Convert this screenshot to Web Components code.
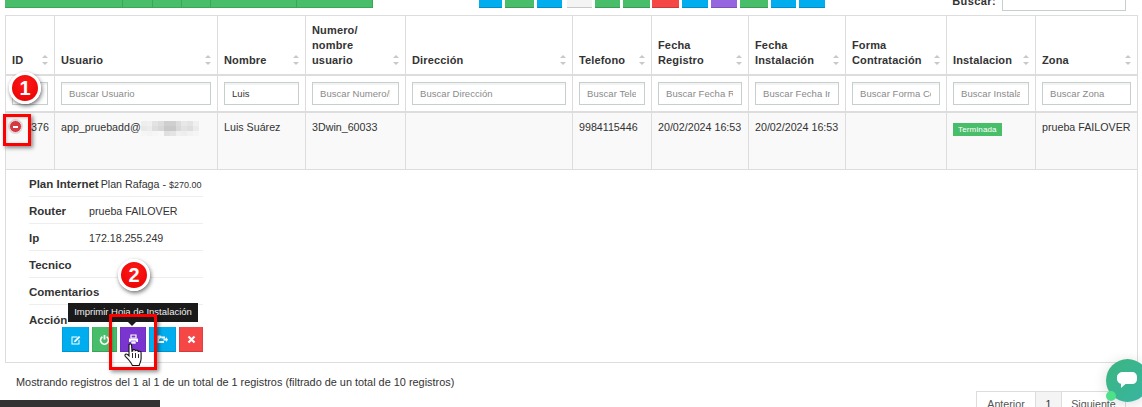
<!DOCTYPE html>
<html lang="es">
<head>
<meta charset="utf-8">
<title>Instalaciones</title>
<style>
html, body { margin: 0; padding: 0; background: #fff; overflow: hidden; }
body { font: 10.7px "Liberation Sans", Arial, sans-serif; color: #333; }
</style>
</head>
<body>
<app-page></app-page>
<script>
// small helper: every element below is a class with an open shadow root
class Base extends HTMLElement {
  constructor() {
    super();
    this.attachShadow({ mode: "open" }).innerHTML = `<style>${this.constructor.css}</style>${this.render()}`;
  }
  render() { return "<slot></slot>"; }
}

class TopToolbar extends Base {
  static css = `
    :host { display: flex; height: 15px; padding-left: 5px; position: relative; font-size: 11px; }
    .group { display: flex; height: 8px; background: #48bd6a; border-bottom: 1px solid #3aa65a; box-sizing: border-box; }
    .group i { display: block; box-sizing: border-box; border-right: 1px solid #3aa65a; }
    .center { display: flex; margin-left: 106px; height: 8px; }
    .center i { display: block; height: 8px; box-sizing: border-box; border-bottom: 1px solid rgba(0,0,0,.18); }
    .search { display: flex; margin-left: auto; margin-right: 16px; }
    label { font-weight: bold; letter-spacing: .4px; margin-top: -6px; margin-right: 6px; line-height: 14px; height: 14px; }
    .box { width: 124px; height: 11px; box-sizing: border-box; border: 1px solid #c5cfcc; border-top: 0; }
  `;
  render() {
    const seg = [118, 30, 29, 29, 86, 76];
    const btn = [[23,"#00aeef",0],[29,"#48bd6a",3],[25,"#00aeef",3],[25,"#f4f4f4",5],[25,"#48bd6a",3],[27,"#48bd6a",3],[27,"#f64747",2],[26,"#00aeef",3],[26,"#9666e0",3],[28,"#48bd6a",3],[25,"#00aeef",3],[26,"#00aeef",3]];
    return `<div class="group">${seg.map(w => `<i style="width:${w}px"></i>`).join("")}</div>
      <div class="center">${btn.map(([w, c, m]) => `<i style="width:${w}px;background:${c};margin-left:${m}px"></i>`).join("")}</div>
      <div class="search"><label>Buscar:</label><div class="box"></div></div>`;
  }
}

class StatusBadge extends Base {
  static css = `
    :host { display: inline-block; background: #48bd6a; color: #fff; font-size: 8px; line-height: 13px; height: 13px; padding: 0 5px; letter-spacing: .15px; white-space: nowrap; margin-top: 3px; }
  `;
}

class MaskedText extends Base {
  static css = `
    :host { display: inline-grid; grid-template-columns: repeat(10, 5.8px); grid-auto-rows: 5px; vertical-align: middle; margin-top: 1px; }
    i { display: block; }
  `;
  render() {
    const g = ["eee","f0f0f0","e3e3e3","ddd","cfcfcf","cfcfcf","dcdcdc","e8e8e8","e4e4e4","f0f0f0",
               "e9e9e9","ececec","dedede","d8d8d8","c9c9c9","c9c9c9","d9d9d9","e2e2e2","dedede","ebebeb",
               "f6f6f6","f4f4f4","f6f6f6","f8f8f8","e0e0e0","e4e4e4","f0f0f0","eee","f2f2f2","f5f5f5"];
    return g.map(c => `<i style="background:#${c}"></i>`).join("");
  }
}

class DetailPanel extends Base {
  static css = `
    :host { display: block; width: 174px; margin-left: 23px; font-size: 10.7px; }
    .row { height: 27px; line-height: 14px; padding-top: 7px; box-sizing: border-box; border-bottom: 1px solid #eee; white-space: nowrap; }
    .last { border: 0; height: auto; padding-top: 8px; }
    b { display: inline-block; min-width: 58px; margin-right: 2px; font-size: 11.5px; color: #333; }
    small { font-size: 9px; }
    .actions { display: flex; gap: 3px; padding-left: 33px; margin-top: 0; }
  `;
  render() {
    const row = (k, v) => `<div class="row"><b>${k}</b>${v}</div>`;
    return row("Plan Internet", "Plan Rafaga - <small>$270.00</small>") + row("Router", "prueba FAILOVER") +
      row("Ip", "172.18.255.249") + row("Tecnico", "") + row("Comentarios", "") +
      `<div class="row last"><b>Acción</b><div class="actions"><slot></slot></div></div>`;
  }
}

class ActionButton extends Base {
  static css = `
    :host { display: flex; align-items: center; justify-content: center; width: var(--w, 27px); height: 25px; box-sizing: border-box;
      background: var(--c); border-bottom: 1px solid rgba(0,0,0,.15); border-left: 1px solid rgba(0,0,0,.08); border-right: 1px solid rgba(0,0,0,.08); }
    svg { display: block; width: 11px; height: 11px; }
  `;
  render() {
    const icons = {
      edit: `<path d="M1.5 2.500h6v1H2.500v6h6V6h1v4.500h-8z" fill="#fff"/><path d="M4.500 6.500 9 2l1.300 1.300-4.500 4.500-1.800.5z" fill="#fff"/>`,
      power: `<path d="M3.400 2.800a4 4 0 1 0 4.200 0" fill="none" stroke="#fff" stroke-width="1.600"/><path d="M5.500 1v4.500" stroke="#fff" stroke-width="1.800"/>`,
      print: `<path d="M3 1h5v3H3z" fill="none" stroke="#fff" stroke-width="1.200"/><path d="M1 4.500h9v3.500H1z" fill="#fff"/><path d="M3 7h5v3H3z" fill="#fff" stroke="#7a35d0" stroke-width=".6"/>`,
      swap: `<path d="M0.500 1.500h3l1 1h3.500v2H4.500V3.500L2 5.500v1.500h5v2H0.500z" fill="#fff"/><path d="M6.500 4.500h2.500V3l2 2.700-2 2.300V6.500H6.500z" fill="#fff"/>`,
      close: `<path d="M2.500 2.500l6 6m0-6l-6 6" stroke="#fff" stroke-width="2.200"/>`
    };
    return `<svg viewBox="0 0 11 11">${icons[this.getAttribute("icon")]}</svg>`;
  }
}

class InstallTable extends Base {
  static css = `
    :host { display: block; margin-left: 5px; width: 1132px; font-size: 10.7px; }
    table { border-collapse: collapse; table-layout: fixed; width: 1132px; }
    th, td { border: 1px solid #ddd; padding: 0; text-align: left; }
    thead th { height: 52px; vertical-align: bottom; border-bottom: 2px solid #ddd; font-size: 11px; font-weight: bold; line-height: 15px; letter-spacing: .15px; color: #333; position: relative; padding: 0 18px 6px 6px; }
    thead th::before, thead th::after { content: ""; position: absolute; right: 6px; border: 3.500px solid transparent; }
    thead th::before { bottom: 16px; border-top: 0; border-bottom: 3.500px solid #c8c8c8; }
    thead th::after { bottom: 9px; border-bottom: 0; border-top: 3.500px solid #c8c8c8; }
    .filters td { height: 35px; padding: 0 6px; border-bottom: 2px solid #ddd; }
    input { display: block; width: 100%; height: 23px; box-sizing: border-box; border: 1px solid #c5cfcc; padding: 0 8px 0 7px; font: 9.500px "Liberation Sans", Arial, sans-serif; letter-spacing: .05px; color: #333; background: #fff; box-shadow: inset 0 2px 0 #f3f3f3; border-radius: 0; }
    input::placeholder { color: #8a8a8a; opacity: 1; }
    .data td { height: 49px; background: #f9f9f9; vertical-align: top; padding: 7px 0 0 6px; line-height: 14px; white-space: nowrap; }
    .data .id { padding-left: 25px; position: relative; }
    .open { position: absolute; left: 3px; top: 7px; width: 13px; height: 13px; border-radius: 50%; background: #d33a44; border: 1px solid #f2d6d8; box-shadow: 0 0 0 1px #ddd; box-sizing: border-box; }
    .open::after { content: ""; position: absolute; left: 3px; top: 4.500px; width: 5px; height: 2px; background: #fff; }
    .detail td { height: 192px; vertical-align: top; padding: 0; border-bottom: 1px solid #ddd; }
  `;
  render() {
    const cols = [
      ["ID", 49, ""], ["Usuario", 163, "Buscar Usuario"], ["Nombre", 88, "Buscar Nombre"],
      ["Numero/<br>nombre<br>usuario", 100, "Buscar Numero/Nombre"], ["Dirección", 167, "Buscar Dirección"],
      ["Telefono", 79, "Buscar Telefono"], ["Fecha<br>Registro", 97, "Buscar Fecha Registro"],
      ["Fecha<br>Instalación", 97, "Buscar Fecha Instalación"], ["Forma<br>Contratación", 101, "Buscar Forma Contratación"],
      ["Instalacion", 89, "Buscar Instalacion"], ["Zona", 102, "Buscar Zona"]
    ];
    return `<table>
      <colgroup>${cols.map(c => `<col style="width:${c[1]}px">`).join("")}</colgroup>
      <thead><tr>${cols.map(c => `<th>${c[0]}</th>`).join("")}</tr></thead>
      <tbody>
        <tr class="filters">${cols.map((c, i) => `<td><input placeholder="${c[2]}" ${i === 2 ? 'value="Luis"' : ""}></td>`).join("")}</tr>
        <tr class="data">
          <td class="id"><span class="open"></span>376</td>
          <td>app_pruebadd@<masked-text></masked-text></td>
          <td>Luis Suárez</td><td>3Dwin_60033</td><td></td><td>9984115446</td>
          <td>20/02/2024 16:53</td><td>20/02/2024 16:53</td><td></td>
          <td><status-badge>Terminada</status-badge></td><td>prueba FAILOVER</td>
        </tr>
        <tr class="detail"><td colspan="11"><slot></slot></td></tr>
      </tbody>
    </table>`;
  }
}

class TablePager extends Base {
  static css = `
    :host { display: flex; justify-content: flex-end; margin: 2px 16px 0 0; font-size: 10.7px; color: #555; }
    span { display: block; height: 30px; line-height: 24px; text-align: center; border: 1px solid #ddd; margin-left: -1px; box-sizing: border-box; }
    .cur { background: #f4f4f4; color: #333; }
  `;
  render() {
    return `<span style="width:60px">Anterior</span><span class="cur" style="width:27px">1</span><span style="width:65px">Siguiente</span>`;
  }
}

class TableInfo extends Base {
  static css = `:host { display: block; padding: 12px 0 0 16px; height: 14px; line-height: 14px; font-size: 10.9px; color: #333; white-space: nowrap; }`;
}

class CalloutBadge extends Base {
  static css = `
    :host { position: absolute; width: 32px; height: 32px; box-sizing: border-box; border-radius: 50%; background: radial-gradient(circle at 50% 35%, #ff1a1a, #e60000); border: 3px solid #fff; box-shadow: 1px 2px 4px rgba(0,0,0,.55);
      display: flex; align-items: center; justify-content: center; color: #fff; font: bold 20px "Liberation Sans", Arial, sans-serif; }
  `;
}

class CalloutFrame extends Base {
  static css = `:host { position: absolute; box-sizing: border-box; border: 3px solid #f00; box-shadow: 2px 2px 4px rgba(0,0,0,.45), inset 1px 1px 3px rgba(0,0,0,.2); }`;
}

class ActionTooltip extends Base {
  static css = `
    :host { position: absolute; left: 68px; top: 303px; width: 130px; height: 19px; background: #1a1a1a; color: #eee; font-size: 9.500px; line-height: 17px; text-align: center; white-space: nowrap; }
    :host::after { content: ""; position: absolute; left: 60px; top: 19px; border: 4px solid transparent; border-top: 4px solid #1a1a1a; border-bottom: 0; }
  `;
}

class HandCursor extends Base {
  static css = `:host { position: absolute; left: 124px; top: 343px; width: 20px; height: 25px; } svg { display: block; }`;
  render() {
    return `<svg width="20" height="25" viewBox="0 0 20 25"><path d="M5 1.500c1-1 2.400-.6 2.600.8l.4 6 .8-.4.2-1.200c1.200-.6 2.200 0 2.200 1l1.300-.4c1-.2 1.700.3 1.700 1.200l1.200-.2c1-.1 1.700.6 1.700 1.600v5.600c0 2.800-1.500 5-1.900 7H8.400c-.8-2.200-2.300-4-4.400-6.500L1.300 13.300c-.8-1-.2-2.300 1-2.300.8 0 1.600.6 2.700 1.800z" fill="#fff" stroke="#111" stroke-width="1.100"/><path d="M8.500 10v5M11.500 10v5M14.500 11v4" stroke="#111" stroke-width=".9"/></svg>`;
  }
}

class ChatBubble extends Base {
  static css = `
    :host { position: absolute; left: 1106px; top: 359px; width: 43px; height: 43px; border-radius: 50%; background: linear-gradient(135deg, #3cb57f, #38b5a3); box-shadow: 0 2px 14px rgba(0,0,0,.14); }
    svg { position: absolute; left: 11px; top: 13px; }
    i { position: absolute; left: 0; top: 32px; width: 10px; height: 10px; border-radius: 50%; background: #4fe08a; }
  `;
  render() {
    return `<svg width="20" height="18" viewBox="0 0 20 18"><path d="M6 0h9c3 0 5 2 5 5v2c0 3-2 5-5 5H8.500L4 16v-4.200C1.600 11.200 0 9.400 0 7V5c0-3 3-5 6-5z" fill="#fff"/></svg><i></i>`;
  }
}

class DarkStrip extends Base {
  static css = `:host { position: absolute; left: 0; top: 400px; width: 160px; height: 7px; background: #333; }`;
}

class AppPage extends Base {
  static css = `:host { display: block; position: relative; width: 1142px; height: 407px; overflow: hidden; }`;
  render() {
    return `<top-toolbar></top-toolbar>
      <install-table>
        <detail-panel>
          <action-button icon="edit" style="--c:#00aeef"></action-button>
          <action-button icon="power" style="--c:#48bd6a;--w:25px"></action-button>
          <action-button icon="print" style="--c:#7a35d0;--w:26px"></action-button>
          <action-button icon="swap" style="--c:#00aeef"></action-button>
          <action-button icon="close" style="--c:#f64747;--w:24px"></action-button>
        </detail-panel>
      </install-table>
      <table-info>Mostrando registros del 1 al 1 de un total de 1 registros (filtrado de un total de 10 registros)</table-info>
      <table-pager></table-pager>
      <callout-badge style="left:9px;top:72px">1</callout-badge>
      <callout-badge style="left:118px;top:259px">2</callout-badge>
      <callout-frame style="left:3px;top:114px;width:28px;height:32px"></callout-frame>
      <action-tooltip>Imprimir Hoja de Instalación</action-tooltip>
      <callout-frame style="left:109px;top:314px;width:48px;height:56px"></callout-frame>
      <hand-cursor></hand-cursor>
      <chat-bubble></chat-bubble>
      <dark-strip></dark-strip>`;
  }
}

// children first so the parents find them upgraded
customElements.define("top-toolbar", TopToolbar);
customElements.define("status-badge", StatusBadge);
customElements.define("masked-text", MaskedText);
customElements.define("detail-panel", DetailPanel);
customElements.define("action-button", ActionButton);
customElements.define("install-table", InstallTable);
customElements.define("table-pager", TablePager);
customElements.define("table-info", TableInfo);
customElements.define("callout-badge", CalloutBadge);
customElements.define("callout-frame", CalloutFrame);
customElements.define("action-tooltip", ActionTooltip);
customElements.define("hand-cursor", HandCursor);
customElements.define("chat-bubble", ChatBubble);
customElements.define("dark-strip", DarkStrip);
customElements.define("app-page", AppPage);
</script>
</body>
</html>
